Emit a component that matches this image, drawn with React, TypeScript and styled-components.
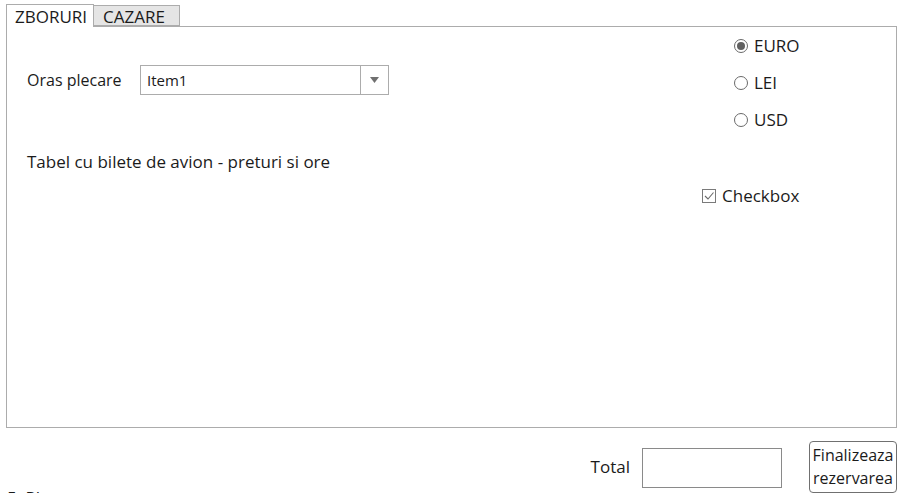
import React from "react";
import styled, { createGlobalStyle } from "styled-components";

const Global = createGlobalStyle`
  html, body { margin: 0; padding: 0; overflow: hidden; background: #ffffff; }
  body { font-family: "Open Sans", "Noto Sans", sans-serif; color: #1b1b1b; }
  #root { width: 908px; height: 493px; overflow: hidden; }
`;

const Window = styled.div`
  display: flex;
  flex-direction: column;
  padding: 4px 11px 0 6px;
  font-size: 17px;
`;

const TabStrip = styled.div`
  display: flex;
  align-items: flex-end;
  height: 22px;
`;

const Tab = styled.div<{ $active?: boolean }>`
  box-sizing: border-box;
  height: ${(p) => (p.$active ? "23px" : "21px")};
  margin-bottom: ${(p) => (p.$active ? "-1px" : "0")};
  padding: 0 0 0 ${(p) => (p.$active ? "8px" : "9px")};
  width: ${(p) => (p.$active ? "88px" : "86px")};
  border: 1px solid #acacac;
  border-bottom: ${(p) => (p.$active ? "none" : "1px solid #acacac")};
  border-left: ${(p) => (p.$active ? "1px solid #acacac" : "none")};
  background: ${(p) => (p.$active ? "#ffffff" : "#e5e5e5")};
  position: relative;
  z-index: ${(p) => (p.$active ? 1 : 0)};
  font-size: 17px;
  line-height: ${(p) => (p.$active ? "23px" : "21px")};
  color: #1b1b1b;
  white-space: nowrap;
`;

const Panel = styled.div`
  box-sizing: border-box;
  height: 402px;
  border: 1px solid #acacac;
  display: grid;
  grid-template-columns: 1fr 180px;
`;

const LeftCol = styled.div`
  display: flex;
  flex-direction: column;
  padding: 38px 0 0 20px;
`;

const FieldRow = styled.div`
  display: flex;
  align-items: center;
  height: 29px;
`;

const Label = styled.span`
  width: 113px;
  font-size: 16px;
  line-height: 20px;
`;

const Combo = styled.div`
  box-sizing: border-box;
  width: 249px;
  height: 30px;
  border: 1px solid #acacac;
  display: flex;
  align-items: stretch;
  background: #ffffff;
`;

const ComboText = styled.div`
  flex: 1;
  display: flex;
  align-items: center;
  padding-left: 6px;
  font-size: 15px;
`;

const ComboButton = styled.div`
  width: 27px;
  border-left: 1px solid #acacac;
  display: flex;
  align-items: center;
  justify-content: center;
`;

const Caption = styled.div`
  margin-top: 58px;
  line-height: 20px;
`;

const RightCol = styled.div`
  display: flex;
  flex-direction: column;
  padding: 9px 0 0 0;
`;

const Option = styled.label<{ $indent?: number }>`
  display: flex;
  align-items: center;
  height: 20px;
  margin-left: ${(p) => p.$indent ?? 0}px;
  margin-bottom: 17px;
  gap: 6px;
  line-height: 20px;
`;

const RadioDot = styled.span<{ $checked?: boolean }>`
  box-sizing: border-box;
  width: 14px;
  height: 14px;
  border-radius: 50%;
  border: 1px solid #6a6a6a;
  display: inline-flex;
  align-items: center;
  justify-content: center;
  &::after {
    content: "";
    width: 8px;
    height: 8px;
    border-radius: 50%;
    background: ${(p) => (p.$checked ? "#606060" : "transparent")};
  }
`;

const CheckSpacer = styled.div`
  height: 39px;
`;

const CheckBox = styled.span`
  box-sizing: border-box;
  width: 14px;
  height: 14px;
  border: 1px solid #7a7a7a;
  display: inline-flex;
  align-items: center;
  justify-content: center;
`;

const Footer = styled.div`
  display: flex;
  align-items: flex-start;
  margin-top: 13px;
  height: 52px;
`;

const StepLabel = styled.div`
  align-self: flex-end;
  margin-bottom: -15px;
  padding-left: 1px;
  line-height: 20px;
`;

const Spacer = styled.div`
  flex: 1;
`;

const TotalLabel = styled.span`
  margin-top: 16px;
  margin-right: 12px;
  line-height: 20px;
`;

const TotalBox = styled.div`
  box-sizing: border-box;
  margin-top: 7px;
  width: 140px;
  height: 40px;
  border: 1px solid #8a8a8a;
  background: #ffffff;
`;

const FinishButton = styled.button`
  box-sizing: border-box;
  margin-left: 27px;
  width: 88px;
  height: 52px;
  padding: 0;
  border: 1px solid #707070;
  border-radius: 4px;
  background: #ffffff;
  font-family: inherit;
  font-size: 16px;
  line-height: 23px;
  color: #1b1b1b;
  text-align: center;
`;

export default function App() {
  return (
    <>
      <Global />
      <Window>
        <TabStrip>
          <Tab $active>ZBORURI</Tab>
          <Tab>CAZARE</Tab>
        </TabStrip>
        <Panel>
          <LeftCol>
            <FieldRow>
              <Label>Oras plecare</Label>
              <Combo>
                <ComboText>Item1</ComboText>
                <ComboButton>
                  <svg width="9" height="6" viewBox="0 0 9 6">
                    <path d="M0 0 L9 0 L4.5 6 Z" fill="#707070" />
                  </svg>
                </ComboButton>
              </Combo>
            </FieldRow>
            <Caption>Tabel cu bilete de avion - preturi si ore</Caption>
          </LeftCol>
          <RightCol>
            <Option $indent={18}>
              <RadioDot $checked />
              EURO
            </Option>
            <Option $indent={18}>
              <RadioDot />
              LEI
            </Option>
            <Option $indent={18}>
              <RadioDot />
              USD
            </Option>
            <CheckSpacer />
            <Option $indent={-14}>
              <CheckBox>
                <svg width="12" height="12" viewBox="0 0 12 12">
                  <path d="M2 6 L5 9 L10.5 2.5" fill="none" stroke="#6a6a6a" strokeWidth="1.1" />
                </svg>
              </CheckBox>
              Checkbox
            </Option>
          </RightCol>
        </Panel>
        <Footer>
          <StepLabel>5. Plata</StepLabel>
          <Spacer />
          <TotalLabel>Total</TotalLabel>
          <TotalBox />
          <FinishButton>
            Finalizeaza
            <br />
            rezervarea
          </FinishButton>
        </Footer>
      </Window>
    </>
  );
}
